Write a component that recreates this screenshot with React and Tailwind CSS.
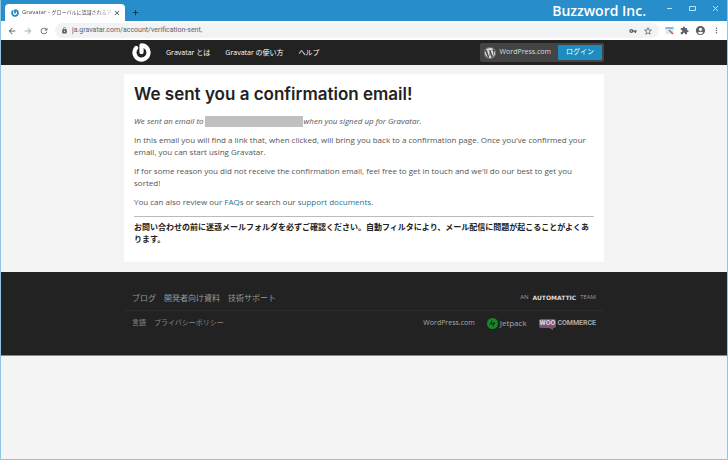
import { FaWordpress } from 'react-icons/fa'
import {
    MdAccountCircle,
    MdAdd,
    MdArrowBack,
    MdArrowForward,
    MdClose,
    MdExtension,
    MdLock,
    MdMoreVert,
    MdRefresh,
    MdStarBorder,
    MdVpnKey,
} from 'react-icons/md'

const NAV_LINKS = ['Gravatar とは', 'Gravatar の使い方', 'ヘルプ']
const FOOTER_LINKS = ['ブログ', '開発者向け資料', '技術サポート']
const LEGAL_LINKS = ['言語', 'プライバシーポリシー']

function GravatarLogo({ className }) {
    return (
        <svg viewBox="0 0 27 27" className={className} fill="none" stroke="currentColor" strokeLinecap="round" strokeLinejoin="round" aria-hidden="true">
            <path d="M13.500 13V3.500A10 10 0 1 1 5.800 7.100" strokeWidth="6" />
        </svg>
    )
}

function WindowButtons() {
    return (
        <div className="flex items-center gap-4 pr-2 pb-1 text-sky-200">
            <button aria-label="Minimize">
                <svg viewBox="0 0 7 7" className="size-[7px]" stroke="currentColor"><path d="M1 3.5h5" /></svg>
            </button>
            <button aria-label="Maximize">
                <svg viewBox="0 0 7 7" className="size-[7px]" fill="none" stroke="currentColor"><path d="M.5 1.5h6v4h-6z" /></svg>
            </button>
            <button aria-label="Close">
                <svg viewBox="0 0 7 7" className="size-[7px]" stroke="currentColor"><path d="M1 1l5 5M6 1L1 6" /></svg>
            </button>
        </div>
    )
}

function BrowserChrome() {
    return (
        <div className="text-[7px]">
            {/* Tab strip */}
            <div className="flex h-[21px] items-end bg-[#288dcb] pl-1">
                <div className="flex h-[17px] w-[120px] items-center rounded-t-[4px] bg-white pr-1 pl-1.5">
                    <GravatarLogo className="mr-[3px] size-2 shrink-0 text-[#1e8cbe]" />
                    <span className="min-w-0 flex-1 bg-linear-to-r from-[#444] from-80% to-[#ccc] bg-clip-text text-[6px] whitespace-nowrap text-transparent">
                        Gravatar - <span className="text-[5px]">グローバルに認識されるア</span>
                    </span>
                    <button aria-label="Close tab"><MdClose className="size-2 text-[#444]" /></button>
                </div>
                <button aria-label="New tab" className="mb-1 ml-1.5"><MdAdd className="size-[9px] text-[#123]" /></button>
                <div className="ml-auto flex h-full items-center gap-5">
                    <span className="text-[14px] leading-5 font-semibold text-white">Buzzword Inc.</span>
                    <WindowButtons />
                </div>
            </div>

            {/* Address bar */}
            <div className="flex h-[19px] items-center bg-white px-1.5 text-[#5f6368]">
                <div className="flex w-12 items-center gap-1.5">
                    <button aria-label="Back"><MdArrowBack className="size-[10px]" /></button>
                    <button aria-label="Forward"><MdArrowForward className="size-[10px] text-[#aaa]" /></button>
                    <button aria-label="Reload"><MdRefresh className="size-[10px]" /></button>
                </div>
                <div className="flex h-[15px] flex-1 items-center rounded-full bg-[#f1f3f4] px-1.5">
                    <MdLock className="size-[7px]" />
                    <input
                        aria-label="Address"
                        className="ml-1 min-w-0 flex-1 bg-transparent font-[Roboto] text-[#5f6368] outline-none"
                        defaultValue="ja.gravatar.com/account/verification-sent,"
                    />
                    <MdVpnKey className="mr-1.5 size-2" />
                    <button aria-label="Bookmark"><MdStarBorder className="size-[10px]" /></button>
                </div>
                <div className="flex items-center gap-1.5 pl-1.5">
                    <svg viewBox="0 0 9 9" className="size-[9px]" aria-hidden="true">
                        <path d="M.5 1h8v7h-8z" fill="#d7edf9" />
                        <path d="M.5 1h8v2h-8z" fill="#71bfe9" />
                        <path d="M4 4l4 4" stroke="#ee5544" strokeWidth="1.600" />
                    </svg>
                    <button aria-label="Extensions"><MdExtension className="size-[9px]" /></button>
                    <button aria-label="Profile"><MdAccountCircle className="size-[11px]" /></button>
                    <button aria-label="Menu"><MdMoreVert className="size-[9px]" /></button>
                </div>
            </div>
        </div>
    )
}

function SiteHeader() {
    return (
        <header className="bg-[#222]">
            <div className="mx-auto flex h-[25px] max-w-[480px] items-center pl-2">
                <a href="#home" aria-label="Gravatar"><GravatarLogo className="size-[19px] text-white" /></a>
                <nav className="ml-[15px] flex gap-[15px] pt-px text-[7px] text-white">
                    {NAV_LINKS.map(label => <a key={label} href="#nav">{label}</a>)}
                </nav>
                <div className="ml-auto flex h-[19px] items-center rounded-[2px] bg-[#444] pr-0.5 pl-1 text-[7px] text-[#ddd]">
                    <FaWordpress className="size-3" />
                    <a href="#wordpress" className="ml-1">WordPress.com</a>
                    <button className="ml-[7px] h-[15px] rounded-[1px] bg-[#1e8cbe] px-2 text-white">ログイン</button>
                </div>
            </div>
        </header>
    )
}

function Message() {
    return (
        <main className="mx-auto mt-[9px] max-w-[480px] bg-white px-[10px] pt-2 pb-[17px] text-[8px] leading-3 text-[#555]">
            <h1 className="font-[Inter] text-[17px] leading-6 font-semibold text-[#222]">We sent you a confirmation email!</h1>
            <p className="mt-[9px] flex items-center italic">
                We sent an email to
                <span className="mx-px h-[11px] w-[98px] bg-[#c0c0c0]" />
                when you signed up for Gravatar.
            </p>
            <p className="mt-[7px]">
                In this email you will find a link that, when clicked, will bring you back to a confirmation page. Once you've
                confirmed your email, you can start using Gravatar.
            </p>
            <p className="mt-[7px]">
                If for some reason you did not receive the confirmation email, feel free to get in touch and we'll do our best to
                get you sorted!
            </p>
            <p className="mt-[7px]">
                You can also review our <a href="#faqs" className="text-[#21759b]">FAQs</a> or search our{' '}
                <a href="#support" className="text-[#21759b]">support documents</a>.
            </p>
            <hr className="mt-2 border-[#bbb]" />
            <p className="mt-1 font-bold text-[#222]">
                お問い合わせの前に迷惑メールフォルダを必ずご確認ください。自動フィルタにより、メール配信に問題が起こることがよくあります。
            </p>
        </main>
    )
}

function SiteFooter() {
    return (
        <footer className="mt-[10px] border-b border-[#888] bg-[#222] pt-[13px] pb-5 text-[#999]">
            <div className="mx-auto max-w-[480px]">
                <div className="flex h-[25px] items-center justify-between px-2">
                    <nav className="flex gap-2 text-[8px]">
                        {FOOTER_LINKS.map(label => <a key={label} href="#footer">{label}</a>)}
                    </nav>
                    <a href="#automattic" className="flex items-center gap-1 text-[6px]">
                        AN <strong className="font-['DejaVu_Sans'] text-[#ddd]">AUTOMATTIC</strong> TEAM
                    </a>
                </div>
                <div className="flex h-[25px] items-center justify-between border-t border-[#2c2c2c] px-2">
                    <nav className="flex gap-2 text-[7px] text-[#888]">
                        {LEGAL_LINKS.map(label => <a key={label} href="#legal">{label}</a>)}
                    </nav>
                    <div className="flex items-center gap-3 text-[7px] text-[#aaa]">
                        <a href="#wordpress">WordPress.com</a>
                        <a href="#jetpack" className="flex items-center gap-0.5 text-[8px]">
                            <svg viewBox="0 0 22 22" className="size-[11px]" aria-hidden="true">
                                <circle cx="11" cy="11" r="11" fill="#128a25" />
                                <path d="M10.400 3v10H5.200zM11.600 19V9h5.200z" fill="#222" />
                            </svg>
                            Jetpack
                        </a>
                        <a href="#woocommerce" className="flex items-center gap-px font-[Roboto] font-bold">
                            <span className="relative rounded-[2px] bg-[#7d5178] px-px leading-[9px] text-[#ddd]">
                                WOO
                                <svg viewBox="0 0 4 2" className="absolute top-full left-2.5 h-0.5 w-1" aria-hidden="true">
                                    <path d="M0 0h4v2z" fill="#7d5178" />
                                </svg>
                            </span>
                            COMMERCE
                        </a>
                    </div>
                </div>
            </div>
        </footer>
    )
}

export default function App() {
    return (
        <div className="min-h-screen border-x border-b border-[#8fc5e3] bg-[#f4f4f4] font-['Open_Sans','Noto_Sans_CJK_JP',sans-serif]">
            <BrowserChrome />
            <SiteHeader />
            <Message />
            <SiteFooter />
        </div>
    )
}
